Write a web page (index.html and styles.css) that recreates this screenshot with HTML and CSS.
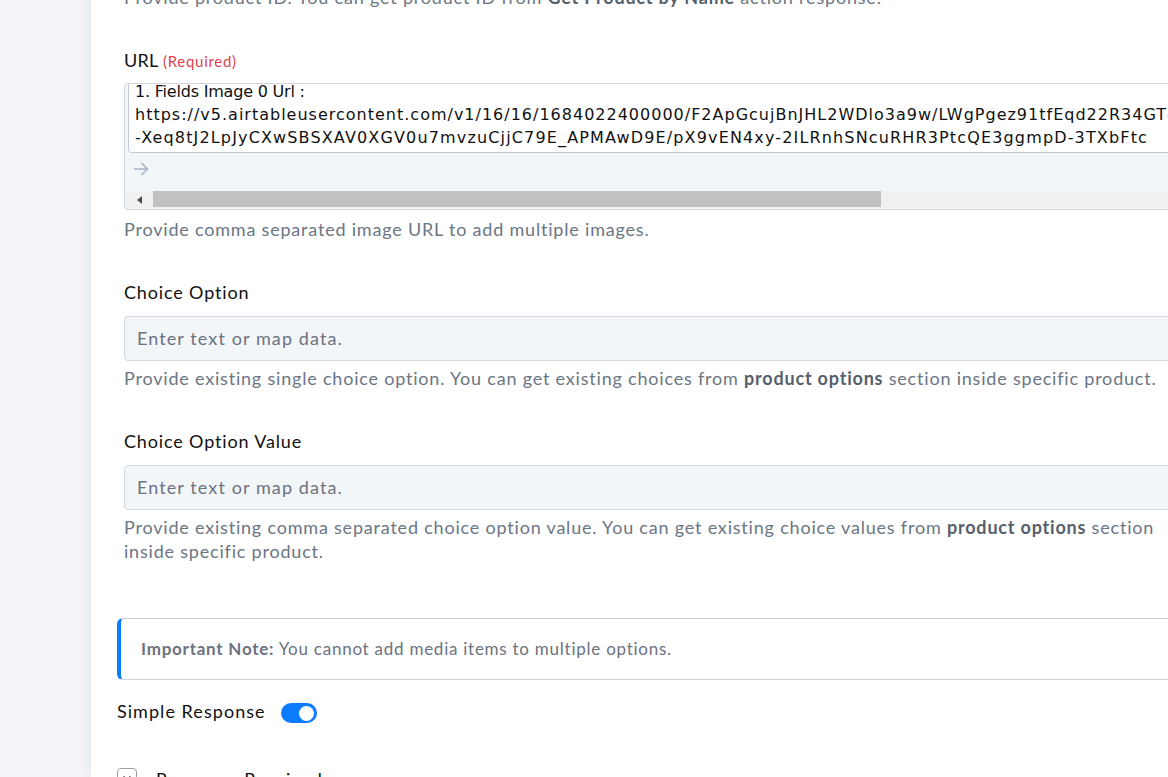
FILE: index.html
```html
<!DOCTYPE html>
<html lang="en">
<head>
<meta charset="utf-8">
<title>Update Product</title>
<link rel="stylesheet" href="styles.css">
</head>
<body>
<div class="layout">
  <aside class="rail"></aside>
  <main class="panel">
    <p class="hint hint-top">Provide product ID. You can get product ID from <b>Get Product by Name</b> action response.</p>

    <section class="field">
      <label class="label label-url">URL <span class="req">(Required)</span></label>
      <div class="mapbox">
        <div class="mapbox-text">
          <div class="mapbox-lines"><span class="tag">1. Fields Image 0 Url :</span>
<span class="val val-a">https://v5.airtableusercontent.com/v1/16/16/1684022400000/F2ApGcujBnJHL2WDlo3a9w/LWgPgez91tfEqd22R34GTq7w0Bz</span>
<span class="val">-Xeq8tJ2LpJyCXwSBSXAV0XGV0u7mvzuCjjC79E_APMAwD9E/pX9vEN4xy-2ILRnhSNcuRHR3PtcQE3ggmpD-3TXbFtc</span></div>
        </div>
        <div class="mapbox-arrow">
          <svg width="16" height="14" viewBox="0 0 16 14"><path d="M1 7 H14.5 M8.5 1 L14.5 7 L8.5 13" fill="none" stroke="#a6b1c2" stroke-width="1.5"/></svg>
        </div>
        <div class="hscroll">
          <span class="hscroll-btn"><svg width="5" height="8" viewBox="0 0 5 8"><path d="M5 0 L0 4 L5 8 Z" fill="#505050"/></svg></span>
          <span class="hscroll-thumb"></span>
        </div>
      </div>
      <p class="hint">Provide comma separated image URL to add multiple images.</p>
    </section>

    <section class="field">
      <label class="label">Choice Option</label>
      <div class="input">Enter text or map data.</div>
      <p class="hint">Provide existing single choice option. You can get existing choices from <b>product options</b> section inside specific product.</p>
    </section>

    <section class="field">
      <label class="label">Choice Option Value</label>
      <div class="input">Enter text or map data.</div>
      <p class="hint hint-wide">Provide existing comma separated choice option value. You can get existing choice values from <b>product options</b> section inside specific product.</p>
    </section>

    <div class="note"><b>Important Note:</b> You cannot add media items to multiple options.</div>

    <div class="toggle-row">
      <span class="toggle-label">Simple Response</span>
      <span class="toggle"><span class="knob"></span></span>
    </div>

    <div class="collapse-row">
      <span class="chev"><svg width="10" height="7" viewBox="0 0 10 7"><path d="M1.5 1.5 L5 5 L8.5 1.5" fill="none" stroke="#333" stroke-width="1.6"/></svg></span>
      <span class="collapse-label">Response Received</span>
    </div>
  </main>
</div>
</body>
</html>
```

FILE: styles.css
```css
html, body {
  margin: 0;
  padding: 0;
}

body {
  background: #f3f5f8;
  overflow: hidden;
  height: 777px;
  font-family: Lato, "Noto Sans", sans-serif;
  color: #111;
}

.layout {
  display: flex;
  height: 777px;
}

.rail {
  flex: none;
  width: 91px;
  background: #f3f5f8;
}

/* main form panel, wider than the window so its right edge is clipped */
.panel {
  flex: none;
  width: 1240px;
  background: #fff;
  box-shadow: -3px 0 10px rgba(30, 50, 80, 0.07);
  padding: 0 0 0 26px;
  margin-top: -15px;
}

.hint {
  margin: 0;
  font-size: 18px;
  line-height: 24px;
  letter-spacing: 0.8px;
  color: #6b7684;
}

.hint b {
  color: #565f6c;
  font-weight: 700;
}

.hint-top {
  padding-left: 7px;
  margin-bottom: 39px;
}

.hint-wide {
  width: 1040px;
}

.field {
  padding-left: 7px;
  margin-bottom: 39px;
}

.label {
  display: block;
  font-size: 18px;
  line-height: 24px;
  letter-spacing: 0.85px;
  color: #111;
  margin-bottom: 12px;
}

.label-url {
  letter-spacing: 0.3px;
  margin-bottom: 10px;
}

.req {
  font-size: 15px;
  letter-spacing: 0.7px;
  color: #e0434e;
}

/* mapped-value box: white text area, arrow strip, horizontal scrollbar */
.mapbox {
  width: 1200px;
  height: 127px;
  border: 1px solid #cfd6dd;
  border-radius: 4px;
  background: #f3f6f9;
  box-sizing: border-box;
  display: flex;
  flex-direction: column;
  margin-bottom: 7px;
}

.mapbox-text {
  margin-left: 3px;
  height: 69px;
  box-sizing: border-box;
  background: #fff;
  border: 1px solid #c4cad1;
  border-top: none;
  border-radius: 0 0 4px 4px;
  overflow: hidden;
  padding-left: 6px;
}

.mapbox-lines {
  margin-top: -4px;
  font-family: "DejaVu Sans", Verdana, sans-serif;
  font-size: 16px;
  line-height: 23px;
  white-space: pre;
  color: #111;
}

.tag {
  letter-spacing: -0.2px;
}

.val {
  letter-spacing: 1.15px;
}

.val-a {
  letter-spacing: 1px;
}

.mapbox-arrow {
  height: 38px;
  padding: 7px 0 0 8px;
  box-sizing: border-box;
}

.hscroll {
  height: 17px;
  background: #f0f0f0;
  display: flex;
  align-items: stretch;
}

.hscroll-btn {
  width: 28px;
  display: flex;
  align-items: center;
  justify-content: center;
}

.hscroll-thumb {
  width: 728px;
  background: #c1c1c1;
  margin: 0 0 1px 0;
}

.input {
  width: 1200px;
  height: 45px;
  box-sizing: border-box;
  background: #f3f6f9;
  border: 1px solid #d3dae1;
  border-radius: 4px;
  padding: 0 12px;
  font-size: 18px;
  line-height: 43px;
  letter-spacing: 1.1px;
  color: #6b7280;
  margin-bottom: 5px;
}

.note {
  width: 1200px;
  height: 62px;
  box-sizing: border-box;
  border: 1px solid #c9d1db;
  border-left: 4px solid #0b7bff;
  border-radius: 6px;
  padding: 0 0 0 20px;
  font-size: 17px;
  line-height: 60px;
  letter-spacing: 0.75px;
  color: #6b7280;
  margin-top: 55px;
  margin-bottom: 19px;
}

.note b {
  color: #6b7280;
}

.toggle-row {
  display: flex;
  align-items: center;
  gap: 15px;
  height: 24px;
}

.toggle-label {
  font-size: 18px;
  line-height: 24px;
  letter-spacing: 1.05px;
}

.toggle {
  width: 36px;
  height: 20px;
  border-radius: 10px;
  background: #0b7bff;
  display: flex;
  align-items: center;
  justify-content: flex-end;
  padding: 0 3px;
  box-sizing: border-box;
  margin-top: 4px;
}

.knob {
  width: 15px;
  height: 15px;
  border-radius: 50%;
  background: #fff;
}

.collapse-row {
  display: flex;
  align-items: flex-start;
  gap: 19px;
  margin-top: 45px;
}

.chev {
  width: 20px;
  height: 20px;
  border: 1px solid #9aa3ad;
  border-radius: 4px;
  display: flex;
  align-items: center;
  justify-content: center;
  box-sizing: border-box;
}

.collapse-label {
  font-size: 18px;
  line-height: 24px;
  letter-spacing: 0.9px;
  margin-top: -1px;
}
```
